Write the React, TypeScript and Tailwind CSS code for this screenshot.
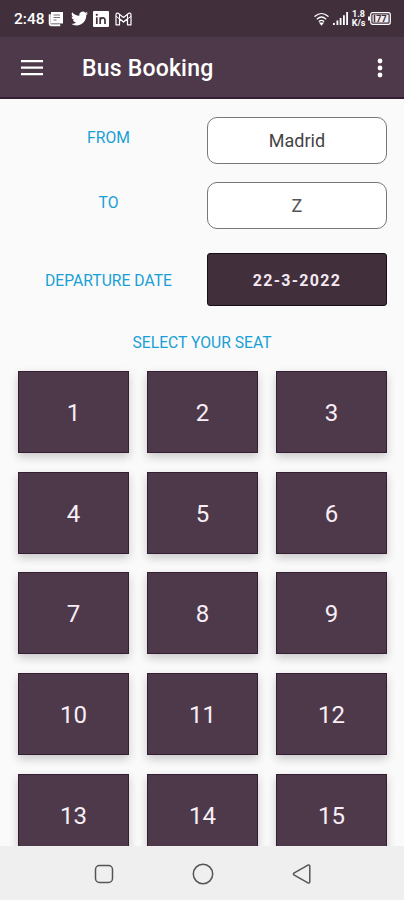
import React from 'react';

const seats = Array.from({ length: 15 }, (_, i) => i + 1);

const StatusBar: React.FC = () => (
  <div className="h-[37px] shrink-0 bg-[#41303c] pl-[14px] pr-[13px] flex items-center justify-between text-white">
    <div className="flex items-center h-full">
      <span className="w-[31px] text-[15.5px] leading-[18px] font-medium whitespace-nowrap">2:48</span>

      {/* News */}
      <svg className="ml-[3px]" width="16" height="16" viewBox="0 0 16 16">
        <path d="M3 1h12v11.500H3z" fill="#fff" />
        <path d="M1 3.500v9A2.500 2.500 0 0 0 3.500 15H12v-1.500H4A1.500 1.500 0 0 1 2.500 12V3.500z" fill="#fff" stroke="#fff" strokeWidth="0.500" />
        <path d="M5.500 4h6.500M5.500 6.500h6.500M5.500 9h3" stroke="#7d6d79" strokeWidth="1.200" />
      </svg>

      {/* Twitter */}
      <svg className="ml-[7px]" width="17" height="17" viewBox="0 0 24 24" fill="#fff">
        <path d="M23.950 4.570a10 10 0 0 1-2.820.770 4.960 4.960 0 0 0 2.160-2.720c-.950.550-2 .950-3.130 1.180a4.920 4.920 0 0 0-8.380 4.480C7.690 8.090 4.070 6.130 1.640 3.160a4.820 4.820 0 0 0-.670 2.480c0 1.710.870 3.210 2.190 4.100a4.900 4.900 0 0 1-2.230-.620v.060a4.920 4.920 0 0 0 3.950 4.830 5 5 0 0 1-2.210.080 4.940 4.940 0 0 0 4.600 3.420A9.870 9.870 0 0 1 0 19.540a14 14 0 0 0 7.550 2.210c9.050 0 14-7.500 14-13.980 0-.210 0-.420-.020-.630a9.940 9.940 0 0 0 2.420-2.570z" />
      </svg>

      {/* LinkedIn */}
      <svg className="ml-[5px]" width="16" height="16" viewBox="0 0 16 16">
        <rect width="16" height="16" rx="1" fill="#fff" />
        <path d="M3.800 6.200v6.800M7.200 13V6.200M7.200 9.300c0-3 4.800-3.400 4.800 0V13" fill="none" stroke="#41303c" strokeWidth="1.700" />
        <circle cx="3.800" cy="3.800" r="1.100" fill="#41303c" />
      </svg>

      {/* Gmail */}
      <svg className="ml-[6px]" width="17" height="14" viewBox="0 0 17 14" fill="none" stroke="#fff" strokeLinejoin="round">
        <path d="M1 12.800V2.500Q1.200.500 3.200 1.300L8.500 5.500l5.300-4.200Q15.800.500 16 2.500V12.800H12.500V6.800L8.500 10l-4-3.200v6z" strokeWidth="1.200" />
        <path d="M1 4.200l7.500 5.800L16 4.200M4.500 2.500v4.300M12.500 2.500v4.300" strokeWidth="1" />
      </svg>
    </div>

    <div className="flex items-center h-full">
      {/* Wifi */}
      <svg width="15" height="14" viewBox="0 0 15 14" fill="none" stroke="#fff" strokeWidth="1.300" strokeLinecap="round">
        <path d="M1 4.300c4-3.700 9-3.700 13 0M3.200 6.900c2.700-2.400 5.900-2.400 8.600 0M5.300 9.300c1.400-1.200 3-1.200 4.400 0" />
        <path d="M6.300 11.200h2.400L7.500 12.700z" fill="#fff" />
      </svg>

      {/* Signal */}
      <svg className="ml-[4px]" width="15" height="13" viewBox="0 0 15 13" fill="#fff">
        <path d="M0 11h1.800v2H0zM3.500 8.500h1.800V13H3.500zM6.700 6h1.800v7H6.700zM10 3.300h1.800V13H10zM13.200 0H15v13h-1.800z" />
      </svg>

      <div className="ml-[3px] w-[15px] flex flex-col items-center text-[9px] leading-[8.500px] font-bold">
        <span>1.8</span>
        <span>K/s</span>
      </div>

      {/* Battery */}
      <svg className="ml-[2px]" width="23" height="13" viewBox="0 0 23 13">
        <path d="M0 4.500h2v4H0z" fill="#fff" />
        <rect x="2.700" y="0.700" width="19.600" height="11.600" rx="2" fill="#41303c" stroke="#fff" strokeWidth="1.200" />
        <rect x="4.500" y="2.400" width="16" height="8.200" rx="0.800" fill="#f1edf0" />
        <text x="13.500" y="9.800" textAnchor="middle" fontSize="9" fontWeight="700" fill="#41303c">77</text>
        <path d="M6.500 3v7" stroke="#41303c" strokeWidth="1.500" />
      </svg>
    </div>
  </div>
);

const Toolbar: React.FC = () => (
  <header className="h-[62px] shrink-0 bg-[#4e394a] border-b-2 border-[#351d34] pl-[21px] pr-[20px] flex items-center text-white">
    <button className="pt-[2px]" aria-label="Menu">
      <svg width="22" height="16" viewBox="0 0 22 16" fill="#fff">
        <path d="M0 0h22v2.300H0zM0 6.500h22v2.300H0zM0 13h22v2.300H0z" />
      </svg>
    </button>
    <h1 className="ml-[39px] pt-[4px] text-[23px] leading-[28px] font-medium tracking-[0.2px]">Bus Booking</h1>
    <button className="ml-auto pt-[2px]" aria-label="More">
      <svg width="8" height="20" viewBox="0 0 8 20" fill="#fff">
        <circle cx="4" cy="3" r="2.400" />
        <circle cx="4" cy="10" r="2.400" />
        <circle cx="4" cy="17" r="2.400" />
      </svg>
    </button>
  </header>
);

const NavigationBar: React.FC = () => (
  <nav className="h-[54px] shrink-0 bg-[#efefef] pt-px pl-px flex items-center justify-center gap-[78px]">
    <svg width="20" height="20" viewBox="0 0 20 20" fill="none" stroke="#555" strokeWidth="1.500">
      <rect x="1.500" y="1.500" width="17" height="17" rx="4" />
    </svg>
    <svg width="22" height="22" viewBox="0 0 22 22" fill="none" stroke="#555" strokeWidth="1.500">
      <circle cx="11" cy="11" r="9.700" />
    </svg>
    <svg width="20" height="20" viewBox="0 0 20 20" fill="none" stroke="#555" strokeWidth="1.500" strokeLinejoin="round">
      <path d="M2.300 8.800 15.500 1.300Q17.800.400 17.800 2.600V17.400Q17.800 19.600 15.500 18.700L2.300 11.200Q.600 10 2.300 8.800z" />
    </svg>
  </nav>
);

const App: React.FC = () => {
  return (
    <div className="w-full h-[900px] flex flex-col overflow-hidden bg-[#fafafa] font-['Roboto',sans-serif]">
      <StatusBar />
      <Toolbar />

      <main className="flex-1 min-h-0 overflow-hidden pt-[18px]">
        {/* Trip details */}
        <div className="pl-[10px] pr-[17px] text-[15.700px] leading-[24px]">
          <div className="flex h-[47px]">
            <span className="w-[197px] pt-[9px] text-center text-[#189fd6]">FROM</span>
            <div className="flex-1 rounded-[10px] border border-[#777] bg-white flex items-center justify-center pt-px text-[18px] text-[#444]">Madrid</div>
          </div>
          <div className="mt-[18px] flex h-[47px]">
            <span className="w-[197px] pt-[9px] text-center text-[#189fd6]">TO</span>
            <div className="flex-1 rounded-[10px] border border-[#777] bg-white flex items-center justify-center pt-px text-[18px] text-[#555]">Z</div>
          </div>
          <div className="mt-[24px] flex h-[53px] items-center">
            <span className="w-[197px] pt-[3px] text-center text-[#189fd6]">DEPARTURE DATE</span>
            <button className="flex-1 h-full rounded-[3px] border border-[#171016] bg-[#412f3c] pt-[3px] text-[16px] font-bold tracking-[1.300px] text-[#f4e8f2]">
              22-3-2022
            </button>
          </div>
        </div>

        <h2 className="mt-[25px] text-center text-[15.700px] leading-[24px] text-[#189fd6]">SELECT YOUR SEAT</h2>

        {/* Seats */}
        <div className="mt-[16px] pl-[18px] pr-[17px] grid grid-cols-3 gap-x-[18px] gap-y-[18.700px]">
          {seats.map((seat) => (
            <button
              key={seat}
              className="h-[82px] border border-[#351d34] bg-[#4e394a] pt-[2px] text-[24px] text-[#f8eef6] shadow-[0_4px_9px_rgba(0,0,0,0.2)]"
            >
              {seat}
            </button>
          ))}
        </div>
      </main>

      <NavigationBar />
    </div>
  );
};

export default App;
